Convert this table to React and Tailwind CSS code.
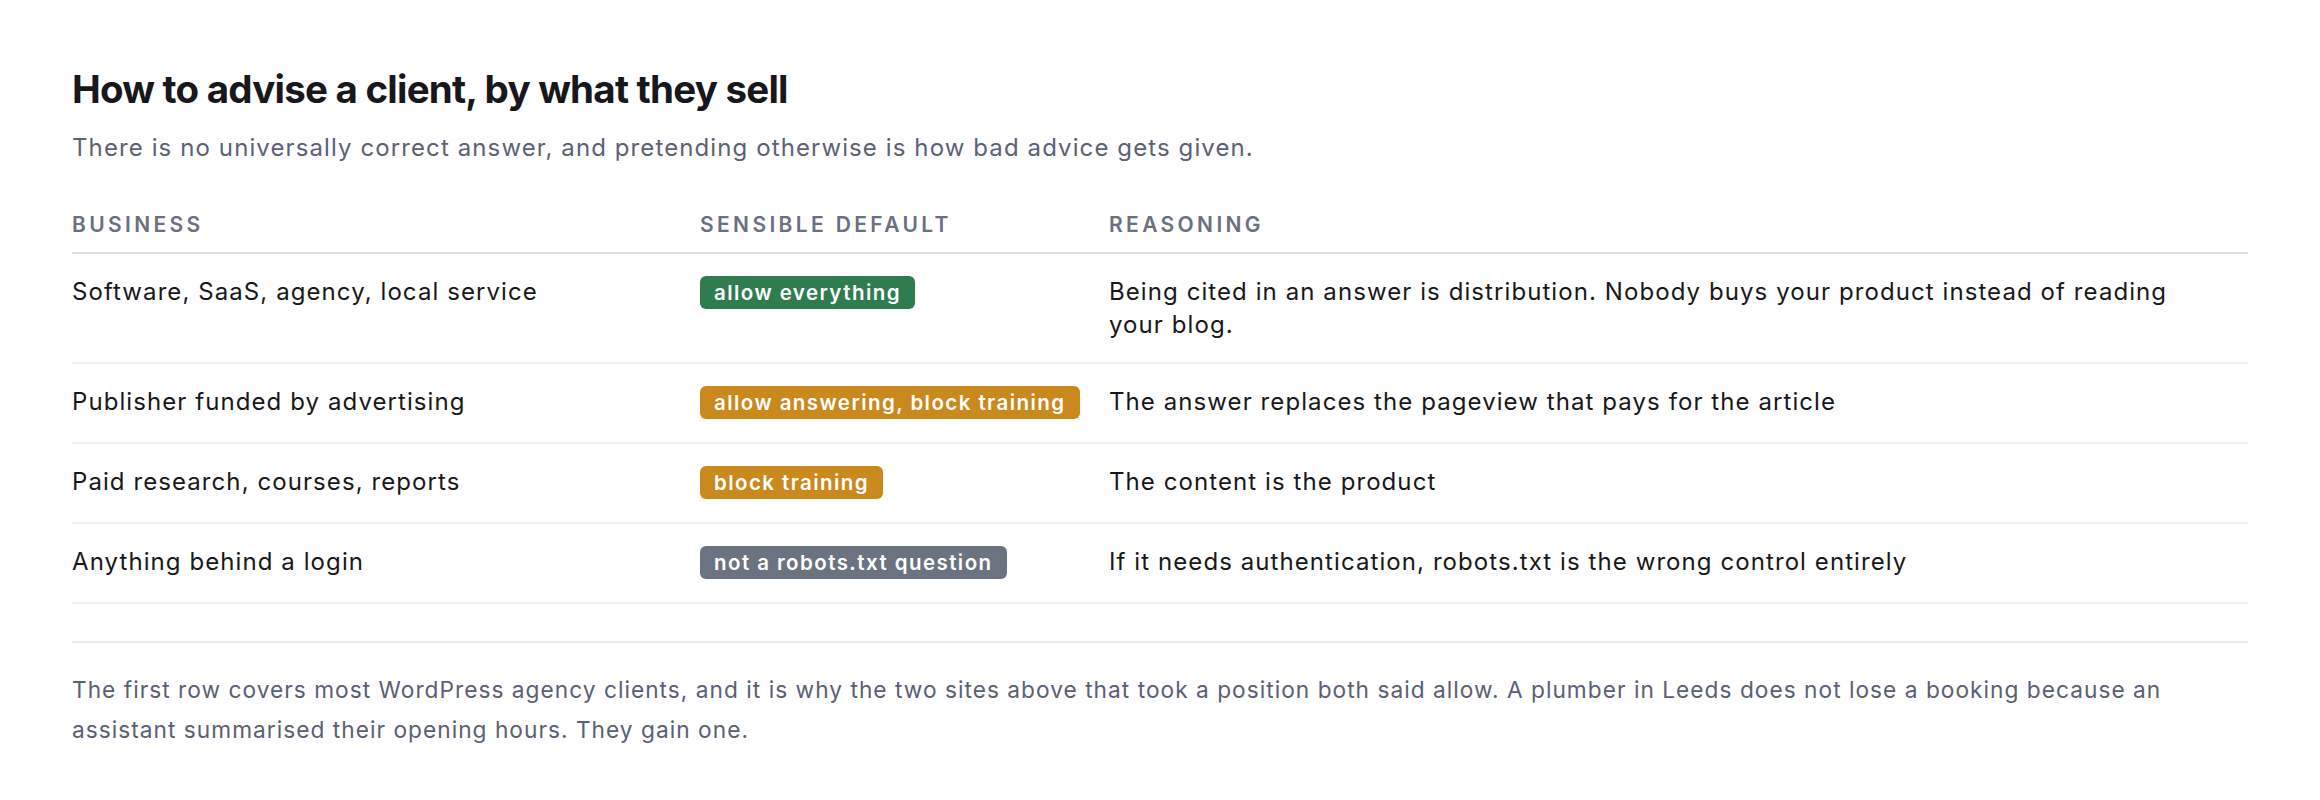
const rows = [
  {
    business: 'Software, SaaS, agency, local service',
    badge: 'allow everything',
    tone: 'bg-[#2f7d4f]',
    reasoning:
      'Being cited in an answer is distribution. Nobody buys your product instead of reading your blog.',
  },
  {
    business: 'Publisher funded by advertising',
    badge: 'allow answering, block training',
    tone: 'bg-[#c9891c]',
    reasoning: 'The answer replaces the pageview that pays for the article',
  },
  {
    business: 'Paid research, courses, reports',
    badge: 'block training',
    tone: 'bg-[#c9891c]',
    reasoning: 'The content is the product',
  },
  {
    business: 'Anything behind a login',
    badge: 'not a robots.txt question',
    tone: 'bg-[#6b7280]',
    reasoning: 'If it needs authentication, robots.txt is the wrong control entirely',
  },
];

function Badge({ children, tone }) {
  return (
    <span
      className={`inline-block rounded-[6px] px-[14px] py-[4px] text-[20.5px] font-semibold leading-[25px] tracking-[0.07em] text-white ${tone}`}
    >
      {children}
    </span>
  );
}

export default function App() {
  return (
    <div className="min-h-[800px] bg-white px-[72px] pt-[66px] pb-[40px] font-['Inter',sans-serif] text-[#18181b]">
      {/* Heading */}
      <h2 className="text-[38.5px] font-bold leading-[46px] tracking-[-0.02em] text-[#17171c]">
        How to advise a client, by what they sell
      </h2>
      <p className="mt-[18px] text-[24px] leading-[36px] tracking-[0.046em] text-[#5c6175]">
        There is no universally correct answer, and pretending otherwise is how bad advice gets given.
      </p>

      {/* Table */}
      <table className="mt-[45px] w-full table-fixed border-collapse text-left">
        <colgroup>
          <col className="w-[628px]" />
          <col className="w-[409px]" />
          <col />
        </colgroup>
        <thead>
          <tr className="border-b-2 border-[#dcdde5]">
            <th className="pr-[18px] pb-[13px] text-[21px] font-semibold uppercase leading-[28px] tracking-[0.16em] text-[#6b7080]">
              Business
            </th>
            <th className="pr-[18px] pb-[13px] text-[21px] font-semibold uppercase leading-[28px] tracking-[0.16em] text-[#6b7080]">
              Sensible default
            </th>
            <th className="pr-[18px] pb-[13px] text-[21px] font-semibold uppercase leading-[28px] tracking-[0.16em] text-[#6b7080]">
              Reasoning
            </th>
          </tr>
        </thead>
        <tbody>
          {rows.map((r) => (
            <tr key={r.business} className="border-b-2 border-[#ededf2]">
              <td className="py-[21px] pr-[18px] align-top text-[24px] leading-[33px] tracking-[0.045em]">
                {r.business}
              </td>
              <td className="py-[21px] pr-[18px] align-top">
                <div className="flex h-[36px] items-start pt-[1px]">
                  <Badge tone={r.tone}>{r.badge}</Badge>
                </div>
              </td>
              <td className="py-[21px] pr-[48px] align-top text-[24px] leading-[33px] tracking-[0.045em]">
                {r.reasoning}
              </td>
            </tr>
          ))}
        </tbody>
      </table>

      {/* Note */}
      <div className="mt-[37px] border-t-2 border-[#e8e8ee] pt-[27px]">
        <p className="text-[22.7px] leading-[40px] tracking-[0.045em] text-[#5a6074]">
          The first row covers most WordPress agency clients, and it is why the two sites above that took a position both said allow. A plumber in Leeds does not lose a booking because an assistant summarised their opening hours. They gain one.
        </p>
      </div>
    </div>
  );
}
